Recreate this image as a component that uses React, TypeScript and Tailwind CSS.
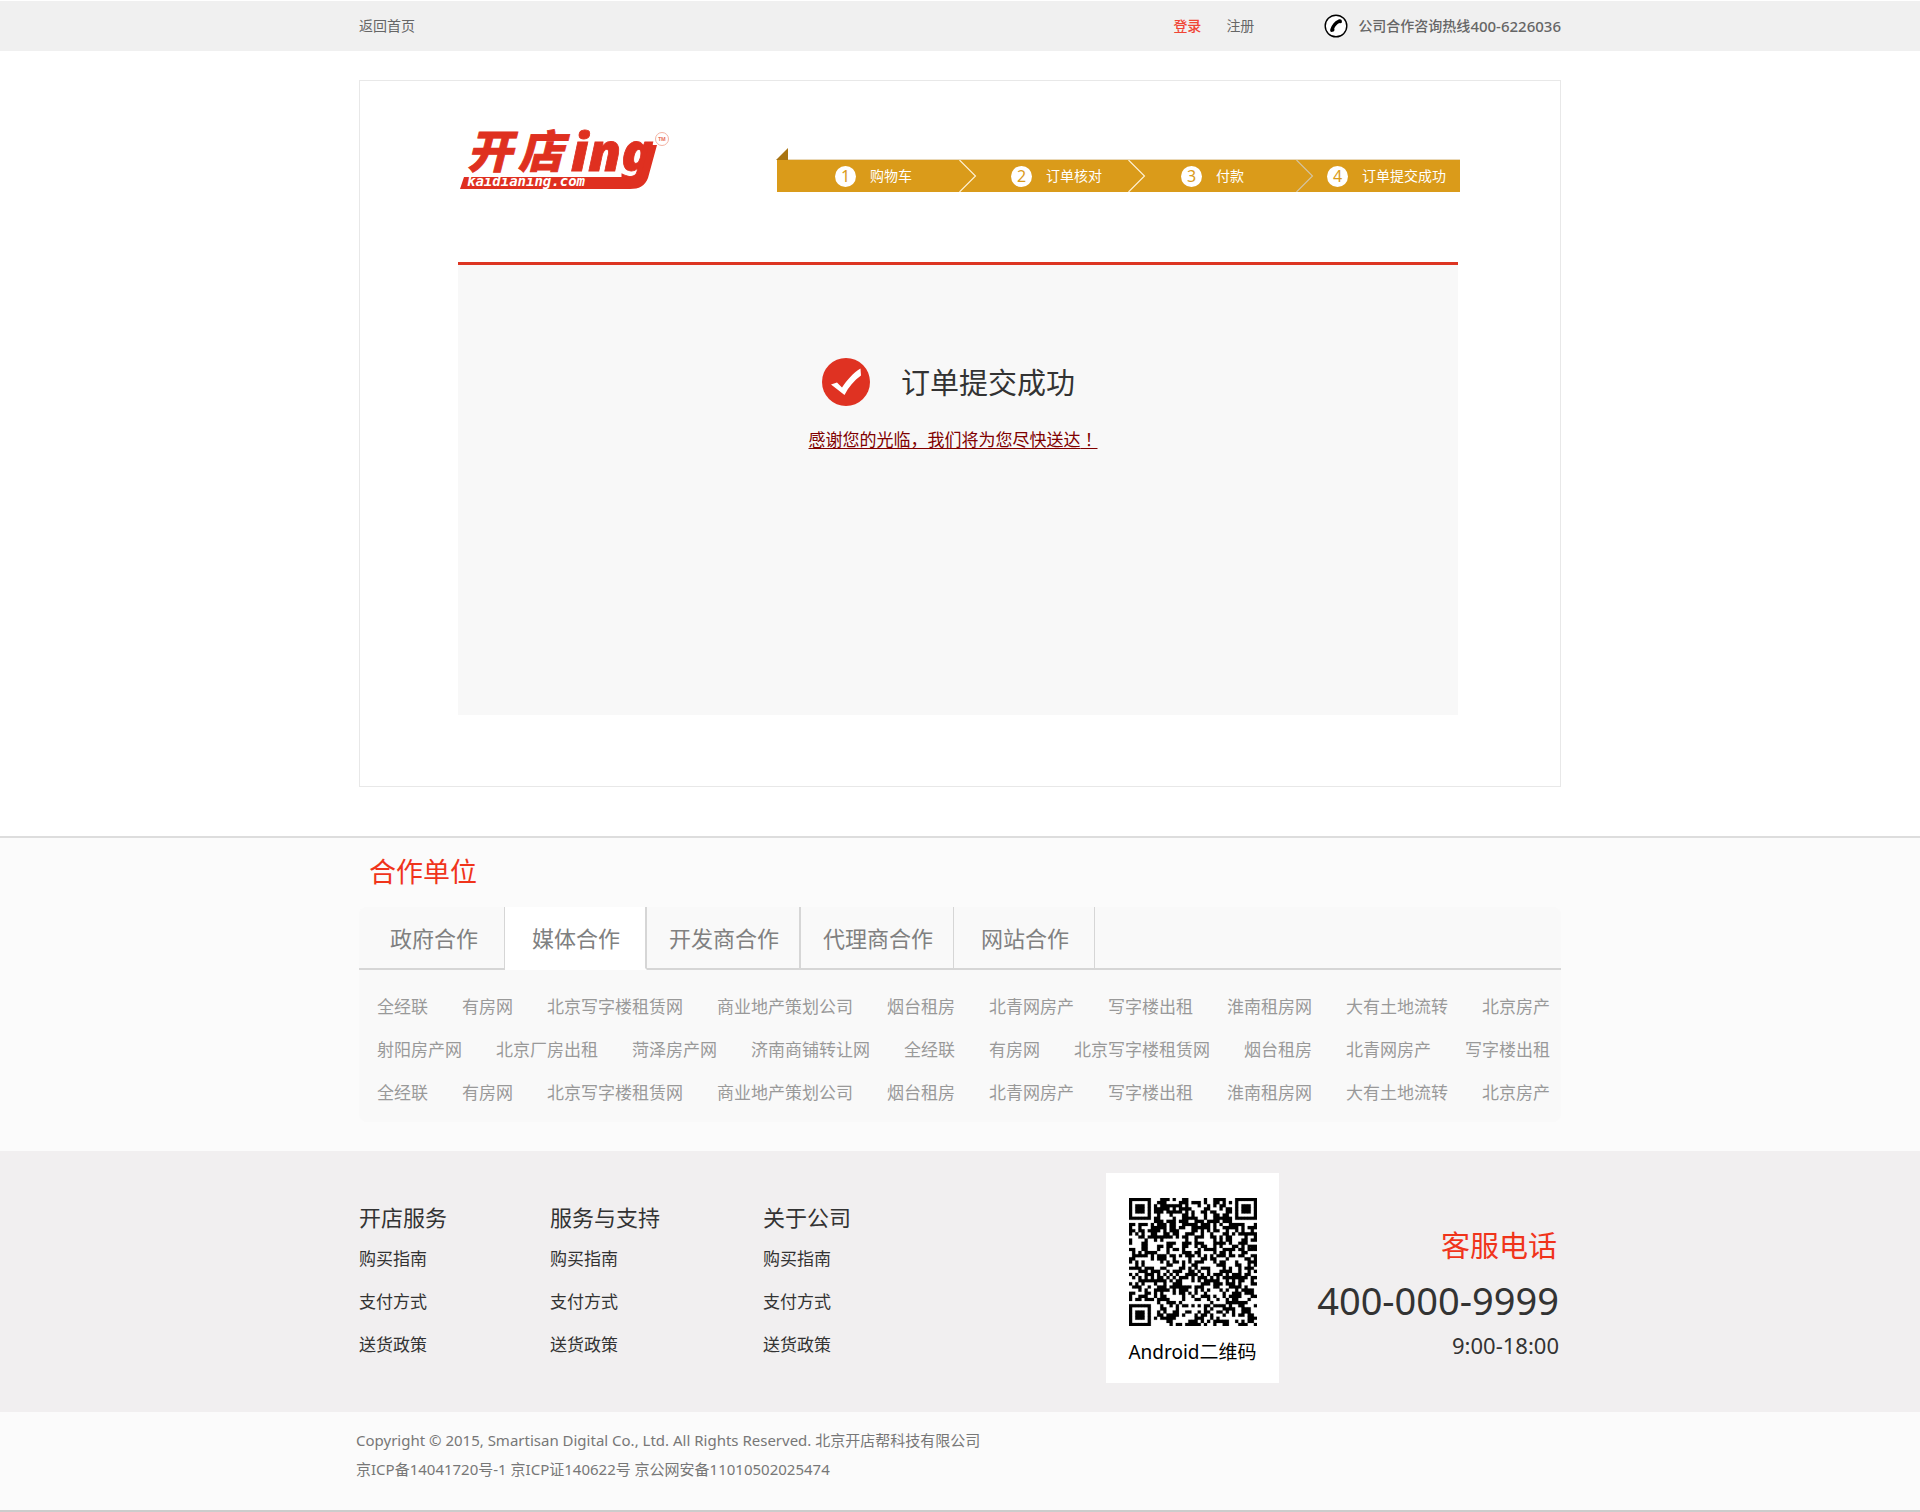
const FONT = "font-['Noto_Sans','Noto_Sans_CJK_SC',sans-serif]";

const steps = [
  { label: "购物车", box: "w-[182px] pl-[58px]" },
  { label: "订单核对", box: "w-[169px] pl-[52px]" },
  { label: "付款", box: "w-[168px] pl-[53px]" },
  { label: "订单提交成功", box: "w-[164px] pl-[31px]" },
];

const tabs = [
  { label: "政府合作", cls: "bg-[#f9f9f9] pl-[31px] pr-[26px] border-r border-b-[#d6d6d6] rounded-tl-lg" },
  { label: "媒体合作", cls: "bg-white pl-[27px] pr-[25px] border-r-2 border-b-white", active: true },
  { label: "开发商合作", cls: "bg-[#f9f9f9] pl-[22px] pr-[20px] border-r-2 border-b-[#d6d6d6]" },
  { label: "代理商合作", cls: "bg-[#f9f9f9] pl-[22px] pr-[20px] border-r border-b-[#d6d6d6]" },
  { label: "网站合作", cls: "bg-[#f9f9f9] pl-[27px] pr-[25px] border-r border-b-[#d6d6d6]" },
];

const partnerRow = [
  "全经联", "有房网", "北京写字楼租赁网", "商业地产策划公司", "烟台租房",
  "北青网房产", "写字楼出租", "淮南租房网", "大有土地流转", "北京房产",
];
const partnerRows = [
  partnerRow,
  [
    "射阳房产网", "北京厂房出租", "菏泽房产网", "济南商铺转让网", "全经联",
    "有房网", "北京写字楼租赁网", "烟台租房", "北青网房产", "写字楼出租",
  ],
  partnerRow,
];

const footerColumns = [
  { title: "开店服务", box: "w-[191px]" },
  { title: "服务与支持", box: "w-[213px]" },
  { title: "关于公司", box: "w-[185px]" },
];
const footerLinks = ["购买指南", "支付方式", "送货政策"];

const QR_SIZE = 41;

function isFinder(x: number, y: number): boolean | null {
  const corners = [[0, 0], [QR_SIZE - 7, 0], [0, QR_SIZE - 7]];
  for (const [cx, cy] of corners) {
    const dx = x - cx;
    const dy = y - cy;
    if (dx >= -1 && dx <= 7 && dy >= -1 && dy <= 7) {
      const ring = Math.max(Math.abs(dx - 3), Math.abs(dy - 3));
      return ring === 3 || ring <= 1;
    }
  }
  return null;
}

function buildQrPath(): string {
  let seed = 20150;
  let d = "";
  for (let y = 0; y < QR_SIZE; y++) {
    for (let x = 0; x < QR_SIZE; x++) {
      seed = (seed * 1103515245 + 12345) % 2147483648;
      const finder = isFinder(x, y);
      const on = finder === null ? (seed >> 12) % 100 < 51 : finder;
      if (on) d += `M${x} ${y}h1v1h-1z`;
    }
  }
  return d;
}

const qrPath = buildQrPath();

function QrCode() {
  return (
    <svg viewBox="0 0 41 41" className="size-32" role="img" aria-label="Android二维码" shapeRendering="geometricPrecision">
      <path d={qrPath} fill="#000" stroke="#000" strokeWidth="0.06" />
    </svg>
  );
}

function Logo() {
  return (
    <svg viewBox="0 0 214 62" className="h-[62px] w-[214px] shrink-0 overflow-visible" role="img" aria-label="开店ing kaidianing.com">
      <g fill="#df3020" stroke="#df3020" strokeWidth="0.8" fontStyle="italic" fontWeight="900">
        <text x="9" y="38" fontSize="45" fontFamily="'Noto Sans CJK SC'">开</text>
        <text x="60" y="38" fontSize="45" fontFamily="'Noto Sans CJK SC'">店</text>
        <text x="113" y="41" fontSize="53" fontFamily="'Noto Sans'">ing</text>
      </g>
      <path d="M6 47H172C172 51 180 52 183 45L191 15H199L190 48C187 56 181 59 172 59H2Z" fill="#df3020" />
      <text x="9" y="56" fontSize="14" fontStyle="italic" fontWeight="700" fill="#fff" fontFamily="'DejaVu Sans Mono'">kaidianing.com</text>
      <circle cx="204" cy="9" r="6.5" fill="#fff" stroke="#f3b3a4" />
      <text x="204" y="11" fontSize="5" fontWeight="700" textAnchor="middle" fill="#e8705c" fontFamily="'Noto Sans'">TM</text>
    </svg>
  );
}

function PhoneIcon() {
  return (
    <svg viewBox="0 0 24 24" className="size-6" aria-hidden="true">
      <circle cx="12" cy="12" r="10.8" fill="#fff" stroke="#000" strokeWidth="1.4" />
      <path d="M14.2 5.8C15.3 5 17 5.2 17.6 6.1L18 8.2C17.4 9.2 16.4 9.5 15.3 9.1C13 10.2 10.9 12.6 10.2 14.8C10.8 15.8 10.4 16.9 9.5 17.6L7.3 18C6 17.5 5.9 16 6.5 14.8C7.7 10.9 10.4 7.5 14.2 5.8Z" fill="#000" />
    </svg>
  );
}

function Steps() {
  return (
    <div className="shrink-0">
      <svg viewBox="0 0 12 12" className="-ml-px block size-3" aria-hidden="true">
        <path d="M12 0V12H0Z" fill="#a97412" />
      </svg>
      <ol className="flex h-8 bg-[#da9b1a] shadow-[0_-1px_0_#ead9b8]">
        {steps.map((s, i) => (
          <li key={s.label} className={`relative flex items-center gap-[14px] text-white ${s.box}`}>
            <span className="flex size-[21px] items-center justify-center rounded-full bg-white text-[16px] leading-none text-[#da9b1a]">
              {i + 1}
            </span>
            <span className="text-[14px] leading-5 whitespace-nowrap">{s.label}</span>
            {i < 3 && (
              <svg viewBox="0 0 18 32" className="absolute top-0 left-full h-8 w-[18px]" aria-hidden="true">
                <path d="M0.5 0L16.5 16L0.5 32" fill="none" stroke={i === 2 ? "#d3c6a8" : "#fff4dc"} strokeWidth="1.1" />
              </svg>
            )}
          </li>
        ))}
      </ol>
    </div>
  );
}

export default function App() {
  return (
    <div className={`bg-white text-[#333] ${FONT}`}>
      <header className="border-t border-white bg-[#f0f0f0]">
        <div className="mx-auto flex h-[50px] max-w-[1202px] items-center text-[14px] leading-5 text-[#666]">
          <a href="#home">返回首页</a>
          <nav className="ml-auto flex gap-[25px]">
            <a href="#login" className="font-medium text-[#f04535]">登录</a>
            <a href="#register">注册</a>
          </nav>
          <p className="ml-[70px] flex items-center font-medium">
            <PhoneIcon />
            <span className="ml-[10px]">公司合作咨询热线</span>
            <span className="text-[15px]">400-6226036</span>
          </p>
        </div>
      </header>

      <main className="mx-auto mt-[29px] max-w-[1202px] border border-[#e8e8e8] pt-[49px] pr-[102px] pb-[71px] pl-[98px]">
        <div className="mb-[70px] flex items-end justify-between">
          <Logo />
          <div className="-mr-[2px]">
            <Steps />
          </div>
        </div>
        <section className="flex flex-col items-center border-t-3 border-[#dd3522] bg-[#f8f8f8] pt-[93px] pb-[263px]">
          <div className="flex items-center gap-[31px] pr-[19px]">
            <svg viewBox="0 0 48 48" className="size-12" aria-hidden="true">
              <circle cx="24" cy="24" r="24" fill="#df3222" />
              <path d="M9 26.5L15 24.5L20 29.5C25 22 31 15 38.5 10.5L39 17.5C32 22.500 26.500 29 22.500 37Z" fill="#fff" />
            </svg>
            <h1 className="pt-[2px] text-[29px] leading-10">订单提交成功</h1>
          </div>
          <a href="#order" className="mt-[21px] mr-[10px] text-[17px] leading-6 text-[#800000] underline underline-offset-2">
            感谢您的光临，我们将为您尽快送达<span className="font-['Noto_Sans_CJK_TC',sans-serif]" lang="zh-Hant">！</span>
          </a>
        </section>
      </main>

      <section className="mt-[49px] border-t-2 border-[#dddddd] bg-[#fbfbfb] pt-[14px] pb-[29px]">
        <div className="mx-auto max-w-[1202px]">
          <h2 className="mb-[15px] pl-[10px] text-[27px] leading-10 text-[#f0341b]">合作单位</h2>
          <div className="rounded-lg bg-[#f9f9f9]">
            <div className="flex" role="tablist">
              {tabs.map((t) => (
                <button
                  key={t.label}
                  type="button"
                  role="tab"
                  aria-selected={!!t.active}
                  className={`h-[63px] border-b-2 border-r-[#d6d6d6] text-[22px] leading-8 whitespace-nowrap text-[#808080] ${t.cls}`}
                >
                  {t.label}
                </button>
              ))}
              <div className="flex-1 border-b-2 border-[#d6d6d6]" />
            </div>
            <div className="pt-[15px] pr-[11px] pb-2 pl-[18px]">
              {partnerRows.map((row, r) => (
                <ul key={r} className="flex justify-between text-[17px] leading-[43px] whitespace-nowrap text-[#999]">
                  {row.map((name) => (
                    <li key={name}>
                      <a href="#partner">{name}</a>
                    </li>
                  ))}
                </ul>
              ))}
            </div>
          </div>
        </div>
      </section>

      <footer>
        <div className="bg-[#f1eff0] pt-[22px] pb-[29px]">
          <div className="mx-auto flex max-w-[1202px] items-start">
            {footerColumns.map((c) => (
              <div key={c.title} className={`pt-7 ${c.box}`}>
                <h3 className="text-[22px] leading-8">{c.title}</h3>
                <ul className="mt-1 text-[17px] leading-[43px]">
                  {footerLinks.map((l) => (
                    <li key={l}>
                      <a href="#help">{l}</a>
                    </li>
                  ))}
                </ul>
              </div>
            ))}
            <div className="ml-auto flex h-[210px] w-[173px] flex-col items-center bg-white pt-[25px]">
              <QrCode />
              <p className="mt-3 text-[19px] leading-7 text-black">Android二维码</p>
            </div>
            <div className="w-[282px] pt-[51px] pr-[2px] text-right">
              <p className="pr-[2px] text-[29px] leading-11 text-[#f0341b]">客服电话</p>
              <p className="mt-2 text-[38px] leading-12">400-000-9999</p>
              <p className="mt-[7px] text-[22px] leading-7">9:00-18:00</p>
            </div>
          </div>
        </div>
        <div className="border-b-2 border-[#cccccc] bg-[#fbfbfb] pt-[14px] pb-[26px]">
          <div className="mx-auto max-w-[1208px] text-[15px] leading-[29px] text-[#777]">
            <p>Copyright © 2015, Smartisan Digital Co., Ltd. All Rights Reserved. 北京开店帮科技有限公司</p>
            <p>京ICP备14041720号-1 京ICP证140622号 京公网安备11010502025474</p>
          </div>
        </div>
      </footer>
    </div>
  );
}
